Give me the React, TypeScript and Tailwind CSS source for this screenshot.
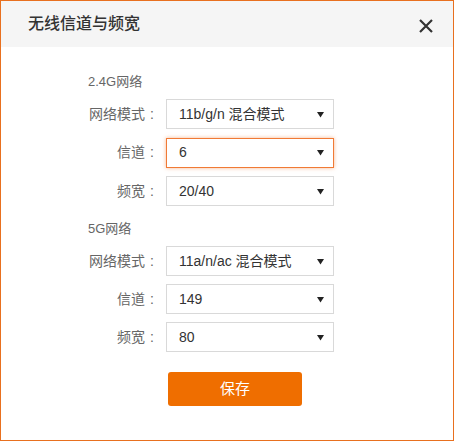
import React from 'react';

const font = { fontFamily: '"Liberation Sans", "Noto Sans CJK SC", sans-serif' };

interface RowProps {
  label: string;
  value: string;
  focused?: boolean;
}

const Arrow = () => (
  <svg width="7" height="7" viewBox="0 0 7 7" className="shrink-0">
    <path d="M0 1 L7 1 L3.5 6.5 Z" fill="#222" />
  </svg>
);

const SelectRow: React.FC<RowProps> = ({ label, value, focused }) => (
  <div className="flex items-center">
    <div className="flex w-[106px] justify-end pr-[12px] text-[14px] text-[#666]">
      <span>{label}</span>
      <span className="ml-[5px]">:</span>
    </div>
    <div
      className={`flex h-[30px] w-[168px] items-center justify-between pl-[12px] pr-[9px] text-[14px] text-[#333] bg-white border ${
        focused ? 'border-[#f07a35] shadow-[0_0_4px_rgba(240,122,53,0.55)]' : 'border-[#d9d9d9]'
      }`}
    >
      <span>{value}</span>
      <Arrow />
    </div>
  </div>
);

const App: React.FC = () => {
  return (
    <div className="h-[441px] w-[454px] border border-[#e8701f] bg-white" style={font}>
      <div className="flex h-[46px] items-center justify-between bg-[#f5f5f5] pl-[27px] pr-[19px]">
        <h3 className="text-[16px] font-medium leading-none text-[#333]">无线信道与频宽</h3>
        <svg width="16" height="16" viewBox="0 0 16 16" className="mt-[4px]">
          <path d="M2 2 L14 14 M14 2 L2 14" stroke="#333" strokeWidth="2.2" />
        </svg>
      </div>
      <div className="flex flex-col pl-[59px] pt-[25px]">
        <div className="ml-[28px] h-[20px] text-[13px] leading-[20px] text-[#666]">2.4G网络</div>
        <div className="mt-[7px] flex flex-col gap-[8.5px]">
          <SelectRow label="网络模式" value="11b/g/n 混合模式" />
          <SelectRow label="信道" value="6" focused />
          <SelectRow label="频宽" value="20/40" />
        </div>
        <div className="ml-[28px] mt-[13px] h-[20px] text-[13px] leading-[20px] text-[#666]">5G网络</div>
        <div className="mt-[7px] flex flex-col gap-[8px]">
          <SelectRow label="网络模式" value="11a/n/ac 混合模式" />
          <SelectRow label="信道" value="149" />
          <SelectRow label="频宽" value="80" />
        </div>
        <button className="ml-[108px] mt-[20px] h-[34px] w-[134px] rounded-[3px] bg-[#ef6e00] text-[15px] text-white">
          保存
        </button>
      </div>
    </div>
  );
};

export default App;
